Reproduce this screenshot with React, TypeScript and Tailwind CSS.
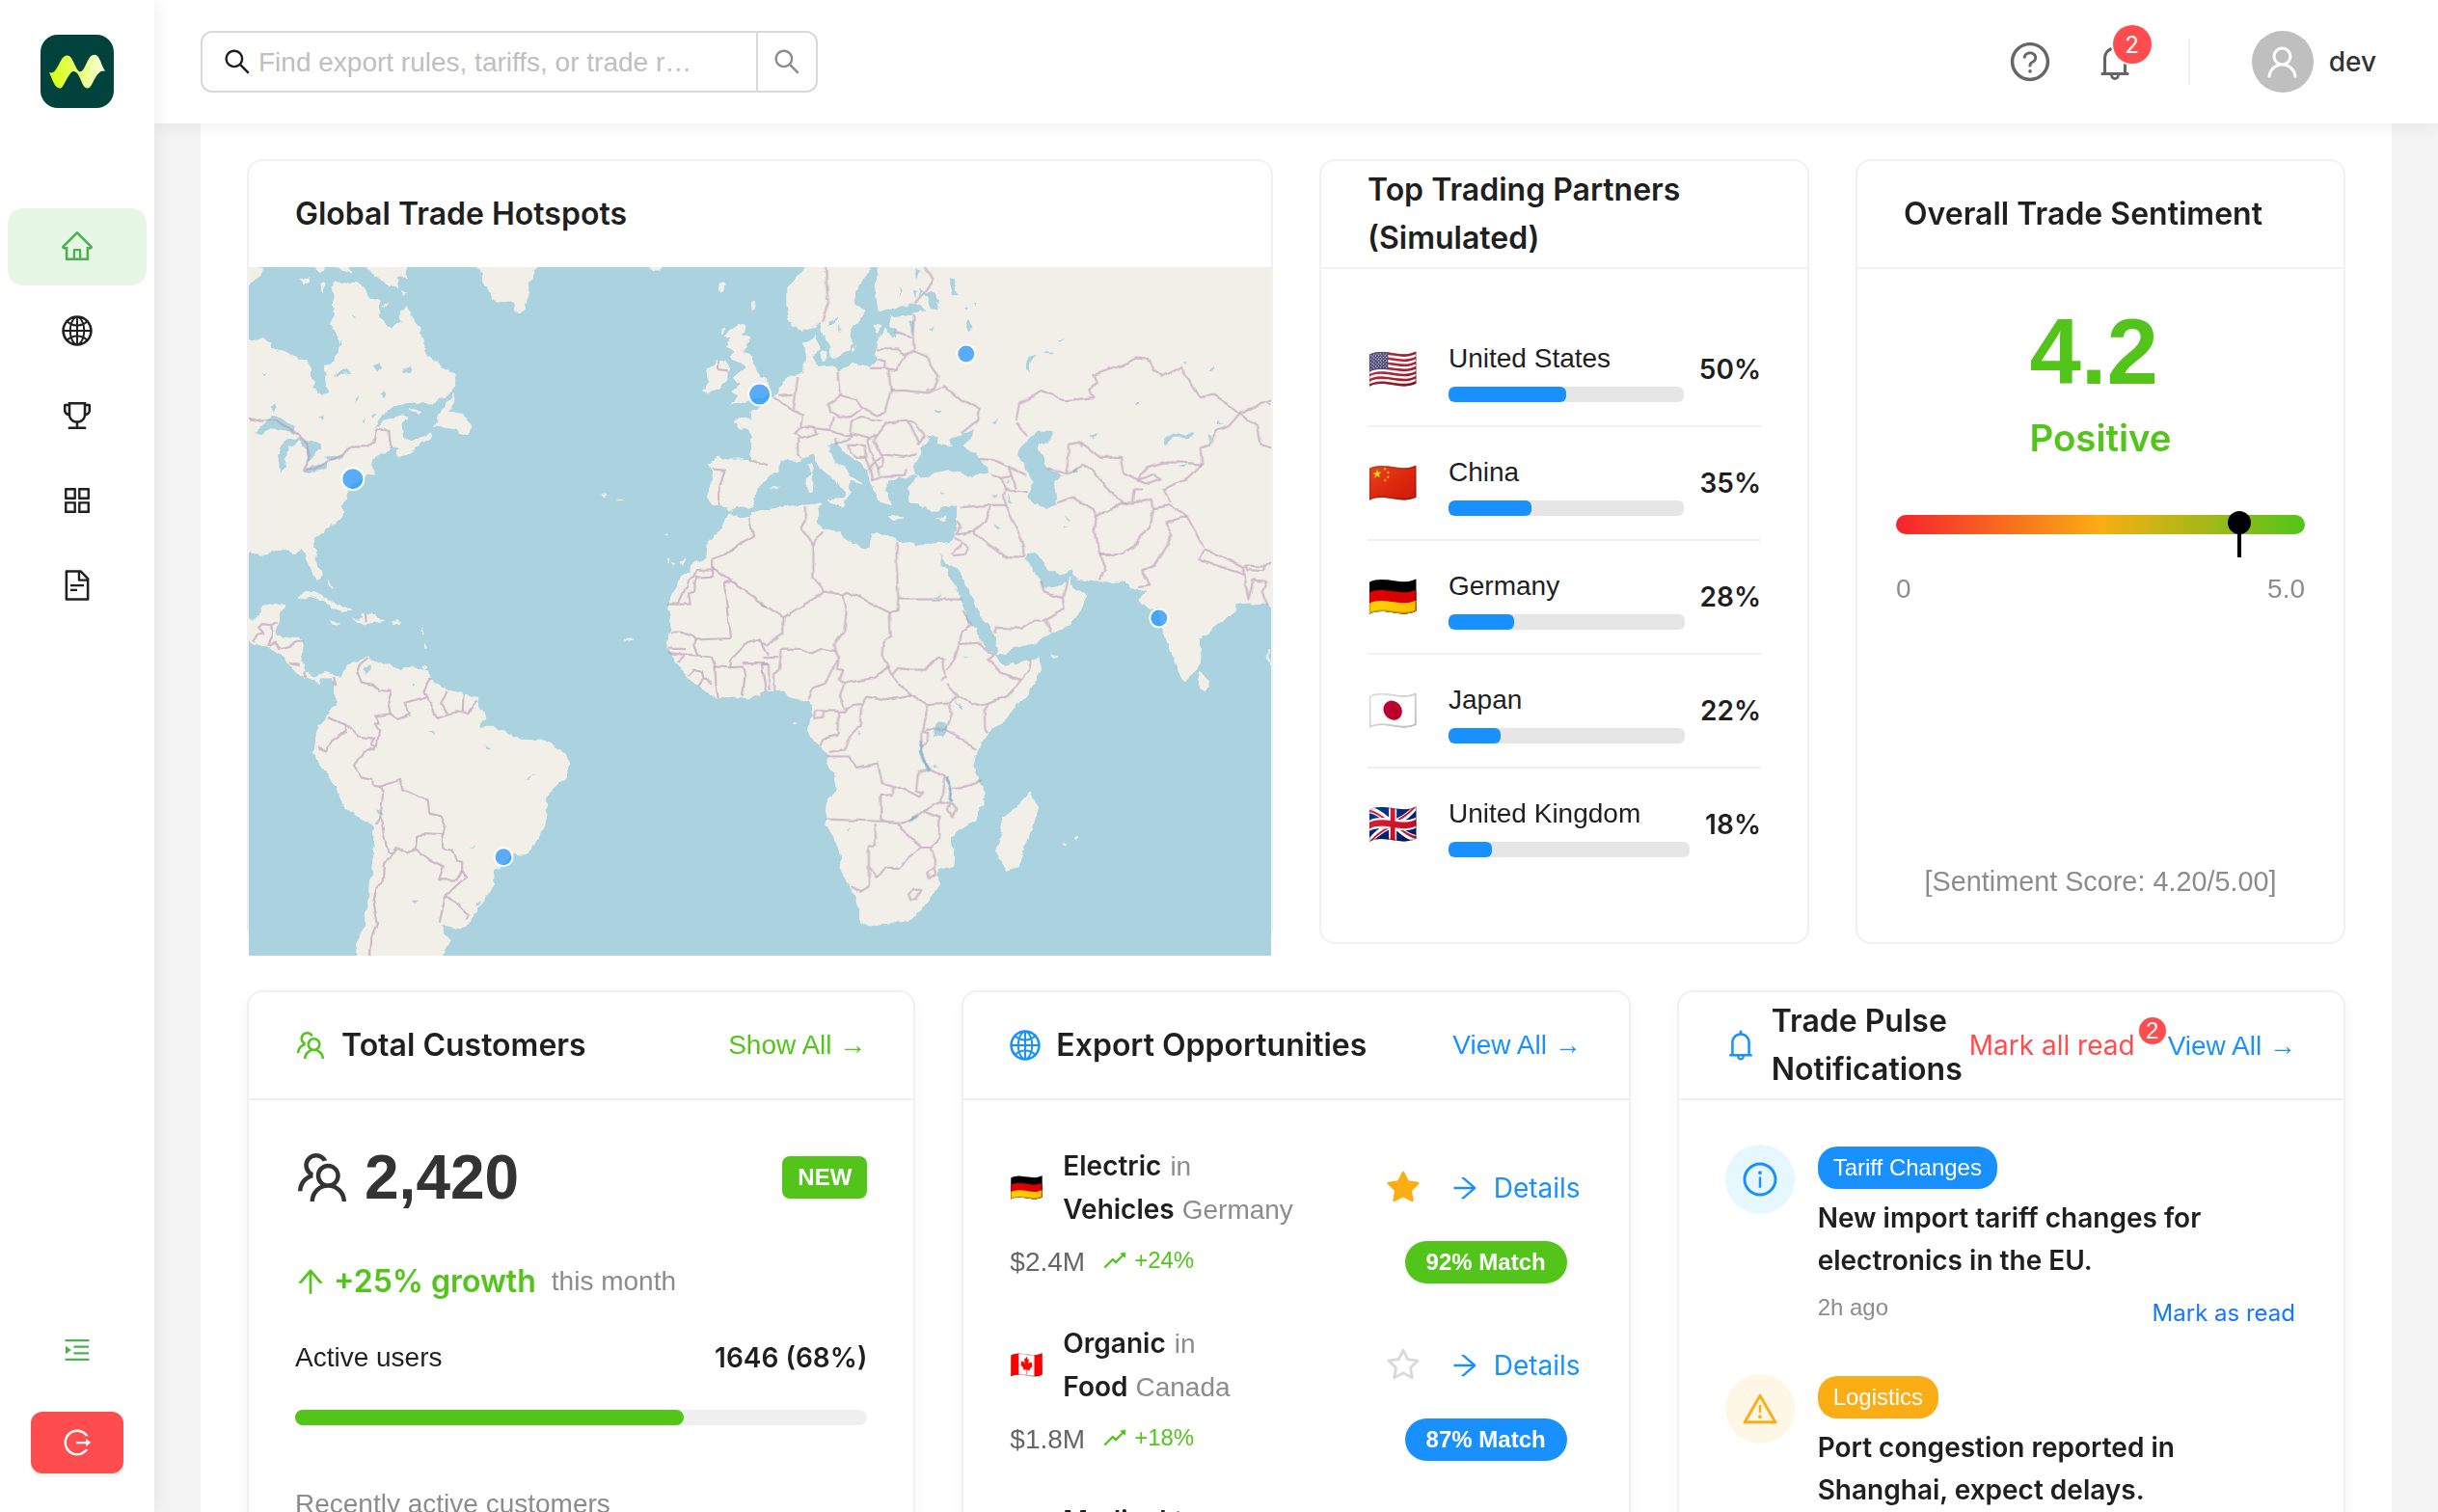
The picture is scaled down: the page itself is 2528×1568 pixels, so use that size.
import React from "react";
import {
  AiOutlineHome,
  AiOutlineGlobal,
  AiOutlineTrophy,
  AiOutlineAppstore,
  AiOutlineFileText,
  AiOutlineMenuUnfold,
  AiOutlineLogout,
  AiOutlineSearch,
  AiOutlineQuestionCircle,
  AiOutlineBell,
  AiOutlineUser,
  AiOutlineTeam,
  AiOutlineArrowUp,
  AiOutlineArrowRight,
  AiFillStar,
  AiOutlineStar,
  AiOutlineRise,
  AiOutlineInfoCircle,
  AiOutlineWarning,
} from "react-icons/ai";

function Logo() {
  return (
    <svg viewBox="0 0 76 76" className="size-[76px]">
      <defs>
        <linearGradient id="wave" x1="0" x2="1" y1="0" y2="0">
          <stop offset="0.1" stopColor="#d9ff1a" />
          <stop offset="0.55" stopColor="#e9ff7a" />
          <stop offset="1" stopColor="#fbffe6" />
        </linearGradient>
      </defs>
      <rect width="76" height="76" rx="18" fill="#02423c" />
      <path
        fill="url(#wave)"
        d="M9 39C14 41 16 36 19 31C22 25 24 21.500 27.400 21.500C32 21.500 34 28 36 32C38 36.500 39.500 38.300 41.200 38.300C44 38.300 46 33 49 27C51 23 53 20.800 56 20.800C60 20.800 62 27 64 32C65.500 35.500 66.500 37 67.600 37.600C65 37.300 64 37.500 62.700 38C59 40 56 46 54 50C52 54 50.500 55.500 48.500 55.500C45 55.500 43 50 41 45C39 40.500 37 38 34 38C31 38 28 45 25 50C23 54 22 55.500 19.800 55.500C15 55.500 12.500 47 9 39Z"
      />
    </svg>
  );
}

const menu = [AiOutlineHome, AiOutlineGlobal, AiOutlineTrophy, AiOutlineAppstore, AiOutlineFileText];

function Sidebar() {
  return (
    <aside className="relative z-20 flex h-full w-[160px] shrink-0 flex-col items-center bg-white shadow-[4px_0_16px_rgba(0,0,0,0.06)]">
      <div className="mt-9">
        <Logo />
      </div>
      <nav className="mt-[104px] flex flex-col gap-2">
        {menu.map((Icon, i) => (
          <div
            key={i}
            className={
              i === 0
                ? "flex h-20 w-[144px] items-center justify-center rounded-2xl bg-[#e6f7e6] pb-[3px] text-[#4caf50]"
                : "flex h-20 w-[144px] items-center justify-center rounded-2xl pb-[3px] text-[#1f1f1f]"
            }
          >
            <Icon size={36} />
          </div>
        ))}
      </nav>
      <div className="mt-auto text-[#4caf50]">
        <AiOutlineMenuUnfold size={32} />
      </div>
      <button className="mt-12 mb-10 flex h-16 w-24 items-center justify-center rounded-xl bg-[#ff4d4f] text-white shadow-[0_4px_0_rgba(255,38,5,0.06)]">
        <AiOutlineLogout size={32} />
      </button>
    </aside>
  );
}

function Header() {
  return (
    <header className="relative z-10 flex h-32 shrink-0 items-center justify-between bg-white pr-16 pl-12 shadow-[0_4px_16px_rgba(0,0,0,0.06)]">
      <div className="flex h-16 w-[640px] overflow-hidden rounded-xl border-2 border-[#d9d9d9] bg-white">
        <div className="flex flex-1 items-center gap-1.5 pl-5">
          <AiOutlineSearch size={32} className="text-[#1f1f1f]" />
          <span className="pt-0.5 text-[28px] text-[#bfbfbf]">Find export rules, tariffs, or trade r…</span>
        </div>
        <div className="flex w-[62px] items-center justify-center border-l-2 border-[#d9d9d9] text-[#8c8c8c]">
          <AiOutlineSearch size={32} />
        </div>
      </div>
      <div className="flex items-center">
        <AiOutlineQuestionCircle size={46} className="text-[#666]" />
        <div className="relative ml-[43px]">
          <AiOutlineBell size={44} className="text-[#666]" />
          <span className="absolute -top-4 left-5 flex size-10 items-center justify-center rounded-full bg-[#ff4d4f] pt-0.5 font-[Inter] text-2xl text-white ring-2 ring-white">
            2
          </span>
        </div>
        <div className="ml-[54px] h-12 w-0.5 bg-[#f0f0f0]" />
        <div className="ml-16 flex size-16 items-center justify-center rounded-full bg-[#bfbfbf] text-white">
          <AiOutlineUser size={41} />
        </div>
        <span className="ml-4 font-[Inter] text-[28px] font-medium text-[#333]">dev</span>
      </div>
    </header>
  );
}

const landWest = [
  "M-5,175L20,180L40,176L75,185L100,200L130,212L160,218L185,222L188,262L205,270L200,280L225,300L245,295L240,260L232,235L255,225L278,210L282,190L275,165L247,142L265,120L262,85L255,60L265,48L300,52L330,48L355,62L362,80L395,88L398,128L432,152L465,135L470,110L477,98L495,125L520,155L530,185L545,212L590,238L620,250L625,275L615,292L580,310L555,320L500,318L445,322L415,340L380,378L420,358L465,345L485,350L470,365L475,395L495,405L550,385L555,398L520,412L490,425L460,440L452,425L465,415L435,418L410,430L378,445L375,465L385,472L360,478L330,490L305,515L300,530L285,545L292,560L280,575L250,595L210,615L198,640L205,660L220,690L222,710L210,714L190,690L178,655L160,645L135,652L115,642L80,645L60,658L30,655L-5,650Z",
  "M565,368L590,330L625,298L622,318L605,335L650,340L655,355L672,370L665,388L640,380L615,375L590,368Z",
  "M485,328L525,335L515,342Z",
  "M-5,5L45,20L40,35L20,42L-5,65Z",
  "M160,45L185,38L190,45L170,55Z",
  "M220,55L232,50L228,70Z",
  "M190,5L240,5L238,18L215,25Z",
  "M255,5L300,5L320,28L290,22Z",
  "M350,5L485,5L480,38L450,35L455,62L420,50L390,35L362,20Z",
  "M410,102L425,98L420,104Z",
  "M465,66L478,70L472,76Z",
  "M693,5L883,5L850,45L845,80L830,115L805,108L790,92L755,95L735,75L715,50Z",
  "M1200,5L1262,5L1240,22L1225,20Z",
  "M150,755L175,742L215,742L250,758L280,768L320,782L300,784L265,776L240,764L215,754L190,748Z",
  "M318,802L350,800L342,788L375,788L412,802L385,806L360,810L345,806Z",
  "M253,804L282,808L265,811Z",
  "M437,803L460,803L458,808L440,809Z",
  "M250,715L260,728L256,732Z",
  "M525,820L532,835L528,835Z M533,850L538,862L534,862Z M527,902L540,904L532,910Z",
  "M-5,800L25,802L50,770L85,764L110,768L95,800L85,830L90,842L120,838L155,838L170,850L165,890L175,920L205,930L235,918L262,925L280,930L300,903L330,895L365,885L370,895L410,895L450,908L475,905L520,908L545,915L550,930L590,955L650,962L690,975L720,1018L700,1040L745,1040L800,1055L820,1068L890,1070L925,1085L960,1098L970,1125L955,1150L925,1175L903,1195L900,1240L885,1280L850,1320L808,1322L770,1345L745,1355L742,1390L700,1440L665,1478L640,1488L585,1478L610,1515L590,1545L570,1560L330,1560L330,1525L350,1490L365,1440L375,1370L385,1290L385,1260L350,1245L290,1212L255,1160L205,1100L205,1085L212,1040L245,1010L268,990L265,945L250,930L225,930L222,942L170,930L130,905L100,875L60,860L20,852L-5,840Z",
  "M1375,290L1390,270L1380,245L1400,238L1420,222L1448,228L1445,270L1420,285L1390,297Z",
  "M1455,155L1480,145L1495,150L1490,165L1515,168L1508,190L1490,205L1515,210L1530,235L1545,260L1567,265L1575,290L1560,305L1510,310L1455,322L1480,305L1460,290L1485,275L1470,265L1495,240L1490,228L1462,220L1465,200L1445,190L1455,175L1440,168Z",
  "M1432,152L1440,150L1430,165Z M1422,55L1438,53L1428,72Z M1520,95L1530,92L1522,112Z",
  "M1600,315L1560,325L1540,348L1515,340L1520,352L1467,355L1485,372L1510,380L1528,405L1520,443L1470,445L1415,438L1395,450L1400,480L1390,520L1400,545L1430,545L1452,560L1475,548L1520,548L1540,515L1560,490L1600,470Z",
  "M1452,565L1480,575L1520,572L1568,552L1568,960L1510,975L1470,970L1420,978L1385,960L1330,930L1290,895L1262,855L1280,825L1268,775L1300,715L1340,680L1385,655L1390,625L1435,595Z",
  "M1068,520L1082,520L1075,524Z M1117,531L1130,533L1120,535Z M1258,609L1270,611L1262,612Z M1268,672L1276,670L1272,677Z M1282,676L1292,676L1286,680Z M1310,670L1322,662L1314,676Z M1138,848L1165,846L1150,850Z",
];

const landEast = [
  "M-30,335L0,325L35,305L70,270L85,258L130,252L132,205L130,185L165,168L168,200L155,215L165,240L210,236L232,250L280,230L325,238L345,225L350,180L372,150L385,175L400,175L402,155L385,140L390,128L460,120L500,110L460,98L400,105L352,115L345,75L350,5L1545,5L1545,785L1515,760L1430,765L1425,780L1360,820L1320,840L1318,890L1310,910L1275,935L1255,920L1230,865L1205,825L1195,770L1165,775L1135,755L1160,738L1120,730L1090,712L1040,715L1000,715L950,708L930,690L900,700L870,692L845,670L825,648L795,650L790,660L815,690L840,720L850,728L875,728L900,720L925,705L935,730L980,750L950,790L900,820L850,840L780,860L712,878L700,840L660,790L632,745L600,700L570,672L565,650L575,625L588,600L588,550L545,550L510,560L480,545L445,540L440,505L460,490L480,485L455,480L430,485L380,490L370,510L390,545L345,535L330,505L318,470L280,440L245,425L230,405L200,408L200,430L240,460L300,498L272,492L260,500L270,520L245,535L255,515L210,480L175,460L150,430L110,445L50,445L40,470L0,495L-30,500Z",
  "M140,5L110,35L75,60L75,100L85,135L115,158L150,150L175,135L185,165L205,190L210,215L230,215L265,195L270,150L300,130L310,110L280,95L285,65L325,15L328,5Z",
  "M-30,560L0,555L90,545L130,548L175,545L165,590L195,600L235,608L250,625L310,642L325,640L330,612L375,610L405,625L480,635L530,628L560,632L577,625L570,678L560,675L530,650L545,680L580,725L605,770L615,800L645,825L670,860L705,880L725,903L790,895L838,885L835,915L800,970L730,1020L680,1055L645,1095L638,1120L650,1160L665,1170L665,1215L640,1245L600,1265L570,1285L580,1320L578,1345L530,1360L530,1395L495,1435L440,1470L380,1478L320,1487L295,1470L295,1445L265,1400L240,1350L232,1310L190,1250L195,1210L222,1180L210,1130L185,1090L140,1050L155,995L140,978L95,980L70,958L0,960L-30,965Z",
  "M808,1183L828,1222L800,1290L775,1350L740,1357L715,1335L710,1305L728,1275L722,1240L760,1225L785,1205Z",
  "M1320,915L1345,945L1330,960L1312,952Z",
  "M198,532L245,530L240,548Z M134,482L155,478L152,515L135,510Z M138,458L150,452L148,475Z M383,570L430,573L400,577Z M528,576L558,569L545,580Z M173,205L195,203L190,225Z M30,505L50,503L42,509Z",
  "M875,878L892,880L880,884Z M905,1296L918,1298L910,1302Z M942,1285L952,1286L945,1290Z M1522,880L1528,870L1526,900Z M97,1030L108,1032L102,1033Z M270,195L280,185L275,200Z M345,142L360,145L350,160Z",
];

const lakesWest = [
  "M22,385L50,365L75,348L110,355L120,365L148,368L140,385L105,380L80,375L50,385Z",
  "M100,415L120,400L165,398L150,410L125,415L118,440L122,462L108,474L95,460L92,440Z",
  "M150,398L185,400L215,405L225,420L200,425L195,440L185,450L178,425L165,405Z",
  "M172,472L200,460L240,450L235,462L190,474Z",
  "M235,440L285,432L280,442L240,446Z",
  "M355,908L370,905L372,918L358,922Z",
  "M462,245L490,235L495,248L475,250Z",
  "M382,235L400,228L410,240L392,248Z",
  "M74,325L88,320L92,330L80,337Z",
  "M260,255L285,246L318,250L280,254Z",
  "M400,295L412,290L416,302L405,305Z M320,318L340,302L332,314Z M220,348L232,347L230,354Z M310,124L330,126L318,130Z M345,352L360,350L352,358Z M220,200L245,192L235,205Z M270,195L290,178L282,192Z M50,248L64,250L58,255Z M375,345L390,342L380,352Z",
  "M388,1222L400,1226L408,1238L396,1235Z",
  "M498,1424L520,1422L512,1432Z M500,942L512,940L506,950Z M840,1156L872,1146L850,1157Z M668,1314L688,1302L676,1314Z M718,1080L732,1088L722,1090Z M548,1050L564,1054L556,1058Z M690,1440L706,1425L700,1438Z",
];

const lakesEast = [
  "M455,460L480,420L505,390L530,396L528,408L550,415L575,412L565,400L600,388L645,378L625,400L600,412L655,440L680,460L682,476L620,482L570,468L520,475L490,486L462,480Z",
  "M770,425L800,400L825,382L870,382L870,405L830,410L825,425L850,440L865,465L900,480L880,495L888,545L855,550L825,545L800,530L815,495L800,470L780,450Z",
  "M1208,412L1212,398L1235,388L1305,385L1300,392L1235,395L1218,414Z",
  "M518,1045L530,1030L560,1030L555,1050L545,1064L520,1062Z",
  "M492,70L515,72L538,92L530,110L508,108L500,92Z",
  "M562,40L585,42L580,60L597,80L575,75Z",
  "M615,140L625,132L638,150L620,155Z",
  "M200,138L228,124L222,140L205,148Z M228,160L242,142L236,156Z",
  "M445,135L456,135L456,158L446,160Z M505,150L520,152L512,156Z",
  "M935,468L950,460L948,472L938,475Z M985,390L1010,388L1000,396Z M955,420L966,404L962,418Z",
  "M1256,456L1284,458L1270,464Z M1340,385L1352,395L1345,404Z M1368,350L1392,366L1370,360Z M1520,316L1535,320L1528,326Z M1126,316L1142,316L1134,322Z",
  "M790,240L800,215L830,210L805,230L810,250L795,245Z M852,206L880,205L870,210Z M888,185L912,170L900,182Z M1340,245L1366,230L1350,245Z M1270,225L1282,224L1276,234Z",
  "M608,105L622,104L616,110Z M634,94L644,96L642,104Z M520,335L542,338L534,343Z M690,368L712,352L706,366Z",
  "M740,520L750,540L744,542Z M738,488L748,492L744,498Z M693,518L710,520L702,526Z M910,572L930,574L920,578Z M908,590L918,588L914,594Z M704,588L718,592L710,596Z M538,518L552,518L545,524Z",
  "M462,22L476,28L468,45Z M470,62L488,66L478,75Z M452,70L462,68L460,80Z M414,60L420,62L416,84Z",
  "M586,978L598,992L604,1002L592,994Z M604,884L618,886L610,890Z M256,1266L274,1264L264,1270Z M290,1050L302,1056L294,1060Z M512,1125L538,1134L520,1132Z M512,755L540,738L530,750Z",
  "M370,500L410,486L440,490L438,520L425,520L440,545L400,540L388,520Z",
];

const deepLakes =
  "M480,1070L478,1095L488,1115L508,1138 M556,1150L568,1170L564,1195L572,1206 M446,1250L470,1238";

const bordersWest = [
  "M-5,350L40,358L85,356L120,370L150,388L182,410L190,445L172,468L205,462L240,448L285,435L305,416L365,415L385,402L392,378L405,374L425,380L428,402L437,418",
  "M20,852L35,835L50,832L35,820L45,810L74,812L75,835L62,855 M74,812L92,805 M60,858L85,850L110,866L135,860L145,850L170,850 M85,848L100,868 M128,898L162,902 M175,915L178,930 M262,925L268,945",
  "M365,885L340,900L332,915L345,940L380,945L400,958L435,960L425,985L432,1010L390,1015L400,1030L385,1030L398,1045L392,1082L375,1080L385,1065L335,1060L300,1035L265,1025L242,1018",
  "M300,1035L298,1050L252,1075L238,1092L215,1085",
  "M390,1085L350,1095L322,1125L345,1150L378,1155L380,1168L400,1170L465,1155L468,1180L545,1202L550,1232L585,1238L597,1258L590,1282",
  "M400,1170L410,1185L402,1240L388,1258 M402,1240L415,1290L425,1318L437,1320",
  "M437,1320L450,1308L480,1318L510,1310L515,1285L530,1276L588,1278L590,1308L620,1312L632,1335L648,1338L648,1358L632,1380L578,1380L592,1350L550,1335L510,1310",
  "M437,1320L415,1345L412,1382L390,1400L380,1435L392,1475L375,1510L370,1560",
  "M648,1358L662,1372L620,1400L597,1418L580,1475 M597,1418L640,1435L668,1460L660,1470",
  "M432,1010L455,1022L490,1012L475,985L545,972L532,960L548,935L555,932 M545,972L558,985L560,1008L575,1018L605,1010L585,985L603,962 M605,1010L650,1003L665,1008L692,982 M650,1003L652,965",
  "M360,788L362,806",
  "M1420,222L1420,245L1448,248 M1402,465L1438,468L1425,500L1422,545 M1512,443L1568,458",
  "M1512,575L1525,615L1485,630L1440,655L1403,665L1403,704L1350,706L1348,738L1330,742L1335,766L1265,766 M1300,764L1330,715L1355,692L1403,690",
  "M1403,685L1460,715L1568,772 M1460,715L1437,718L1455,842L1350,845L1335,835L1305,828L1275,828",
  "M1350,845L1345,855L1358,880L1268,875 M1268,865L1318,866 M1358,880L1400,885L1410,905L1455,907L1460,885L1500,855L1545,845L1568,880 M1300,895L1320,880",
  "M1410,905L1412,945L1420,978 M1455,907L1492,905L1500,925L1492,970 M1492,898L1568,898 M1550,898L1562,960 M1328,925L1345,910L1370,915L1375,930L1358,948 M1375,930L1402,945",
];

const bordersEast = [
  "M192,5L195,55L200,95L180,135 M490,15L515,40L490,70L460,95 M458,120L455,165L458,198 M398,160L420,165L450,172 M345,198L410,198L432,212L458,200L500,212L508,235L530,258L515,285L495,290",
  "M325,240L370,240L370,225L348,220 M370,240L405,245L435,212 M370,240L382,245L388,290L370,340",
  "M388,290L430,290L500,295L550,280L585,305L655,330L652,355L600,385",
  "M228,250L235,300L285,310L300,325L345,345L368,340 M235,300L198,322L205,340L235,350L275,345L300,330",
  "M108,260L95,335L125,345L120,370 M35,305L95,335 M50,300L95,298 M120,370L100,385L120,395L165,385L155,372Z M120,370L205,378L215,350 M205,378L245,390L265,388L270,358L300,350L362,358 M108,395L108,430L120,440",
  "M270,385L325,395L350,388L375,362L440,358L475,410L490,390L460,360L440,358 M350,388L338,400L360,432L430,438L470,432 M325,395L318,400L325,425L340,450L365,435 M220,395L225,408L255,400L270,388 M255,412L310,412L312,440L285,440Z M312,440L325,465L340,450L350,465L365,460L365,435",
  "M325,465L332,490L370,480L430,478L435,465 M350,465L352,480",
  "M655,442L700,445L745,460L795,478 M690,478L720,485L755,480L745,460 M720,485L735,508L765,515L800,518 M755,480L765,510 M735,508L725,520L735,545L690,545L595,550",
  "M765,360L800,390 M765,355L775,320L840,290L915,312L1000,305L985,288L1010,270L1000,255L1080,235L1130,218L1160,220L1175,240L1205,258L1260,238L1318,305L1360,300L1440,340L1535,310 M1440,340L1490,370L1500,410L1535,418",
  "M1440,340L1405,370L1370,380L1350,412L1320,418L1325,455L1270,450L1210,450L1160,460L1130,490",
  "M920,475L920,410L960,405L1020,440L1080,440L1090,475L1130,490L1180,478L1200,488L1165,498L1130,490 M860,465L920,475L965,455L1000,470L1050,520L1100,542 M1325,455L1280,485L1210,510L1230,540",
  "M888,540L935,528L1005,560L1000,600L1015,650L1035,690L1015,712 M1005,570L1060,550L1075,540L1115,540L1120,510L1145,510 M1115,540L1175,530L1180,552L1230,545L1280,570L1305,605L1330,640",
  "M1015,655L1085,655L1130,630L1170,590L1180,552 M1280,570L1215,585L1235,615L1180,680L1145,690L1168,725L1130,728",
  "M1330,645L1370,655L1450,685L1448,698L1370,680L1320,665Z M1455,680L1515,682L1510,692L1462,690Z M1450,690L1465,755L1480,712L1520,715L1505,740L1525,770 M1515,682L1535,672",
  "M735,545L765,595L790,640L790,660L730,660L635,605 M690,545L675,580L635,605L580,612 M580,620L605,630L570,655 M605,630L620,640L610,655L575,658 M588,580L600,590L590,610",
  "M840,715L850,740L905,752L910,775L850,800L820,800L780,820L705,818L700,830 M905,752L918,715 M855,800L870,828",
  "M130,548L130,580L118,595L155,635L155,705L190,738 M155,635L165,615L182,605 M190,738L245,745L258,738L385,785L408,780L410,755L605,755 M408,628L405,650L410,755",
  "M190,738L65,795L0,765 M65,795L65,830L15,855L0,850 M245,745L255,780L248,825L220,855L222,870L180,865L150,875L115,865L60,865L52,910L38,925L38,958",
  "M385,785L388,838L365,850L362,880L380,905 M0,900L20,900L22,958 M0,885L50,885 M222,870L235,885L215,905L190,945L150,955L138,975 M235,880L225,912L245,915L235,935L248,942L235,970L250,1000",
  "M380,905L340,930L300,935L248,942 M380,905L390,925L450,970L500,988 M390,925L410,908L450,912L490,912L530,885L545,885L545,905L555,930L540,935",
  "M605,780L630,812L602,825L595,855L580,890L555,912 M595,855L650,852L700,880 M700,880L680,890L700,900L720,918L780,935L740,970L680,985L650,990L590,972L555,945 M805,890L805,912L780,935 M680,985L670,1000L672,1045L682,1055",
  "M160,1003L250,1005L258,998 M160,1005L158,1020L185,1018L185,1005 M230,1005L228,1058L185,1065L178,1080 M258,998L275,990L300,988L295,1035L265,1060L248,1090L200,1095 M300,988L315,972L370,980L450,970",
  "M500,988L498,1010L480,1050L480,1070 M500,988L560,985L572,1010L555,1045L490,1045 M560,985L585,972 M555,1045L600,1065L645,1090 M480,1050L500,1052L498,1075L480,1085",
  "M195,1105L262,1105L285,1130L350,1120L362,1165L395,1170L395,1190L358,1192L358,1245L375,1250L190,1245 M395,1170L440,1182L475,1195L485,1185L465,1180L470,1140L510,1135L550,1150L540,1205L490,1225",
  "M375,1250L410,1252L445,1248L490,1225L535,1240L535,1285L510,1308L480,1308L445,1285L410,1252 M342,1255L342,1305L322,1305L322,1395L300,1405L268,1395 M325,1350L345,1372L375,1355L415,1355L440,1330L480,1308 M510,1308L522,1335L522,1368L505,1375L500,1362L520,1352",
  "M442,1412L460,1400L480,1405L465,1425L448,1425Z M575,1175L615,1172L662,1160 M540,1205L575,1210L585,1225L572,1240L560,1225L568,1208",
];

const hotspots = [
  { x: 107.8, y: 219.7, r: 11.5 },
  { x: 529.6, y: 132, r: 11.5 },
  { x: 743.8, y: 90, r: 9.5 },
  { x: 943.8, y: 364, r: 9.5 },
  { x: 264, y: 611.7, r: 9.5 },
];

const Paths = ({ list }: { list: string[] }) => (
  <>
    {list.map((d, i) => (
      <path key={i} d={d} vectorEffect="non-scaling-stroke" />
    ))}
  </>
);

const MAP_SCALE = "translate(-2 -7) scale(0.34439 0.46556)";

function WorldMap() {
  return (
    <svg viewBox="0 0 1060 714" className="h-[714px] w-[1060px] bg-[#aad3df]">
      <defs>
        <filter id="coast" x="-20" y="-20" width="1100" height="754" filterUnits="userSpaceOnUse" colorInterpolationFilters="sRGB">
          <feTurbulence type="fractalNoise" baseFrequency="0.09" numOctaves="2" seed="4" />
          <feDisplacementMap in="SourceGraphic" scale="8" xChannelSelector="R" yChannelSelector="G" />
          <feGaussianBlur stdDeviation="0.6" />
        </filter>
        <filter id="border" x="-20" y="-20" width="1100" height="754" filterUnits="userSpaceOnUse" colorInterpolationFilters="sRGB">
          <feTurbulence type="fractalNoise" baseFrequency="0.07" numOctaves="2" seed="9" />
          <feDisplacementMap in="SourceGraphic" scale="5" xChannelSelector="R" yChannelSelector="G" />
          <feGaussianBlur stdDeviation="0.5" />
        </filter>
      </defs>
      <g filter="url(#coast)">
        <g transform={MAP_SCALE}>
          <g fill="#f2efe9" stroke="#f2efe9" strokeWidth="1" strokeLinejoin="round">
            <Paths list={landWest} />
            <g transform="translate(1550.600 0)">
              <Paths list={landEast} />
            </g>
          </g>
          <g fill="#aad3df">
            <Paths list={lakesWest} />
            <g transform="translate(1550.600 0)">
              <Paths list={lakesEast} />
            </g>
          </g>
        </g>
      </g>
      <g filter="url(#border)">
        <g transform={MAP_SCALE}>
          <g fill="none" stroke="#b897b0" strokeOpacity="0.6" strokeWidth="2.2" strokeLinejoin="round">
            <Paths list={bordersWest} />
            <g transform="translate(1550.600 0)">
              <Paths list={bordersEast} />
              <path d={deepLakes} stroke="#8fb4cf" strokeOpacity="1" strokeWidth="3" vectorEffect="non-scaling-stroke" />
            </g>
          </g>
        </g>
      </g>
      {hotspots.map((h, i) => (
        <g key={i}>
          <circle cx={h.x} cy={h.y} r={h.r} fill="#1890ff" fillOpacity="0.7" />
          <circle cx={h.x} cy={h.y} r={h.r} fill="none" stroke="#fff" strokeWidth="2" />
        </g>
      ))}
    </svg>
  );
}

const Title = ({ children }: { children: React.ReactNode }) => (
  <h3 className="font-[Inter] text-[32px] leading-[50px] font-semibold text-[#1f1f1f]">{children}</h3>
);

function MapCard() {
  return (
    <section className="h-[814px] w-[1064px] rounded-2xl border-2 border-[#f0f0f0] bg-white">
      <div className="flex h-[110px] items-center px-12">
        <Title>Global Trade Hotspots</Title>
      </div>
      <WorldMap />
    </section>
  );
}

const partners = [
  { flag: "🇺🇸", name: "United States", pct: 50 },
  { flag: "🇨🇳", name: "China", pct: 35 },
  { flag: "🇩🇪", name: "Germany", pct: 28 },
  { flag: "🇯🇵", name: "Japan", pct: 22 },
  { flag: "🇬🇧", name: "United Kingdom", pct: 18 },
];

function PartnersCard() {
  return (
    <section className="h-[814px] w-[508px] rounded-2xl border-2 border-[#f0f0f0] bg-white">
      <div className="flex h-[112px] items-center border-b-2 border-[#f0f0f0] px-12">
        <Title>
          Top Trading Partners
          <br />
          (Simulated)
        </Title>
      </div>
      <ul className="mx-12 mt-[46px]">
        {partners.map((p) => (
          <li key={p.name} className="flex h-[118px] items-center border-b-2 border-[#f0f0f0] last:border-transparent">
            <span className="w-[84px] text-[42px] leading-none">{p.flag}</span>
            <div className="flex-1">
              <div className="pt-px text-[28px] leading-[44px]">{p.name}</div>
              <div className="mt-[7px] h-4 overflow-hidden rounded-md bg-[#e6e6e6]">
                <div className="h-full rounded-md bg-[#1890ff]" style={{ width: `${p.pct}%` }} />
              </div>
            </div>
            <span className="ml-4 font-[Inter] text-[28px] font-semibold">{p.pct}%</span>
          </li>
        ))}
      </ul>
    </section>
  );
}

function SentimentCard() {
  return (
    <section className="flex h-[814px] w-[508px] flex-col rounded-2xl border-2 border-[#f0f0f0] bg-white">
      <div className="flex h-[112px] shrink-0 items-center border-b-2 border-[#f0f0f0] px-12">
        <Title>Overall Trade Sentiment</Title>
      </div>
      <div className="flex flex-1 flex-col items-center px-10 pb-[41px]">
        <div className="mt-[38px] text-[#52c41a]">
          <div className="text-[96px] leading-[96px] font-bold">4.2</div>
          <div className="mt-[10px] font-[Inter] text-[38.4px] leading-[62px] font-semibold">Positive</div>
        </div>
        <div className="relative mt-[49px] h-5 w-[424px] rounded-full bg-[linear-gradient(to_right,#f5222d,#faad14_50%,#52c41a)]">
          <div className="absolute -top-1 left-[344px] size-6 rounded-full bg-black" />
          <div className="absolute top-2 left-[354px] h-9 w-1 bg-black" />
        </div>
        <div className="mt-[35px] flex w-[424px] justify-between text-[28px] leading-[44px] text-[#8c8c8c]">
          <span>0</span>
          <span>5.0</span>
        </div>
        <div className="mt-auto text-[28.8px] leading-[44px] text-[#8c8c8c]">[Sentiment Score: 4.20/5.00]</div>
      </div>
    </section>
  );
}

const cardClass =
  "h-[700px] min-w-0 flex-1 rounded-2xl border-2 border-[#f0f0f0] bg-white shadow-[0_4px_16px_rgba(0,0,0,0.04)]";

function CustomersCard() {
  return (
    <section className={cardClass}>
      <div className="flex h-[112px] items-center border-b-2 border-[#f0f0f0] px-12">
        <AiOutlineTeam size={36} className="-ml-0.5 mr-3.5 text-[#52c41a]" />
        <Title>Total Customers</Title>
        <span className="mr-px ml-auto text-[28px] text-[#52c41a]">Show All →</span>
      </div>
      <div className="px-12 pt-10">
        <div className="flex h-20 items-center">
          <AiOutlineTeam size={64} className="-ml-1 text-[#333]" />
          <span className="ml-3 text-[64px] leading-none font-bold text-[#333]">2,420</span>
          <span className="ml-auto flex h-11 items-center rounded-lg bg-[#52c41a] px-4 text-2xl font-bold text-white">NEW</span>
        </div>
        <div className="mt-[43px] flex h-[50px] items-center">
          <AiOutlineArrowUp size={36} className="-ml-0.5 text-[#52c41a]" />
          <span className="ml-1.5 font-[Inter] text-[32px] font-semibold text-[#52c41a]">+25% growth</span>
          <span className="ml-4 text-[28px] text-[#8c8c8c]">this month</span>
        </div>
        <div className="mt-[32px] flex items-center justify-between text-[28px] leading-[44px]">
          <span>Active users</span>
          <span className="font-[Inter] font-semibold">1646 (68%)</span>
        </div>
        <div className="mt-8 h-4 rounded-full bg-[#f0f0f0]">
          <div className="h-full w-[68%] rounded-full bg-[#52c41a]" />
        </div>
        <div className="mt-[60px] text-[28px] leading-[44px] text-[#8c8c8c]">Recently active customers</div>
      </div>
    </section>
  );
}

const exportsList = [
  { flag: "🇩🇪", a: "Electric", b: "Vehicles", c: "Germany", v: "$2.4M", g: "+24%", m: "92% Match", star: true },
  { flag: "🇨🇦", a: "Organic", b: "Food", c: "Canada", v: "$1.8M", g: "+18%", m: "87% Match", star: false },
  { flag: "🇯🇵", a: "Medical", b: "Devices", c: "Japan", v: "$3.1M", g: "+15%", m: "85% Match", star: false },
];

function ExportCard() {
  return (
    <section className={cardClass}>
      <div className="flex h-[112px] items-center border-b-2 border-[#f0f0f0] px-12">
        <AiOutlineGlobal size={36} className="-ml-0.5 mr-3.5 text-[#1890ff]" />
        <Title>Export Opportunities</Title>
        <span className="mr-px ml-auto text-[28px] text-[#1890ff]">View All →</span>
      </div>
      <div className="px-12 pt-[47px]">
        {exportsList.map((e) => (
          <div key={e.a} className="h-[184px]">
            <div className="flex h-[88px] items-center">
              <span className="w-[55px] text-[28px] leading-none">{e.flag}</span>
              <div className="text-[28px] leading-[44px] text-[#8c8c8c]">
                <div>
                  <b className="mr-[9px] font-[Inter] font-semibold text-[#1f1f1f]">{e.a}</b>in
                </div>
                <div>
                  <b className="mr-2 font-[Inter] font-semibold text-[#1f1f1f]">{e.b}</b>
                  {e.c}
                </div>
              </div>
              <div className="mr-0.5 ml-auto flex items-center text-[#1890ff]">
                {e.star ? (
                  <AiFillStar size={40} className="text-[#faad14]" />
                ) : (
                  <AiOutlineStar size={40} className="text-[#d9d9d9]" />
                )}
                <AiOutlineArrowRight size={32} className="ml-7" />
                <span className="ml-3.5 font-[Inter] text-[28px]">Details</span>
              </div>
            </div>
            <div className="mt-[11px] flex h-[44px] items-center">
              <span className="text-[28px] text-[#666]">{e.v}</span>
              <AiOutlineRise size={28} className="mb-1 ml-[17px] text-[#52c41a]" />
              <span className="mb-1 ml-1.5 text-2xl text-[#52c41a]">{e.g}</span>
              <span
                className={
                  e.star
                    ? "mr-4 ml-auto flex h-11 items-center rounded-3xl bg-[#52c41a] px-[22px] text-2xl font-bold text-white"
                    : "mr-4 ml-auto flex h-11 items-center rounded-3xl bg-[#1890ff] px-[22px] text-2xl font-bold text-white"
                }
              >
                {e.m}
              </span>
            </div>
          </div>
        ))}
      </div>
    </section>
  );
}

function Notice({
  icon,
  iconClass,
  tag,
  tagClass,
  lines,
}: {
  icon: React.ReactNode;
  iconClass: string;
  tag: string;
  tagClass: string;
  lines: string[];
}) {
  return (
    <div className="flex h-[238px]">
      <div className={iconClass}>{icon}</div>
      <div className="ml-6 flex-1 pt-0.5">
        <span className={tagClass}>{tag}</span>
        <div className="mt-2 font-[Inter] text-[28px] leading-[44px] font-semibold">
          {lines[0]}
          <br />
          {lines[1]}
        </div>
        <div className="mt-2 mr-0.5 flex justify-between">
          <span className="text-2xl leading-[38px] text-[#8c8c8c]">2h ago</span>
          <span className="pt-1.5 font-[Inter] text-2xl leading-[38px] text-[#1677ff]">Mark as read</span>
        </div>
      </div>
    </div>
  );
}

function NotificationsCard() {
  return (
    <section className={cardClass}>
      <div className="flex h-[112px] items-center border-b-2 border-[#f0f0f0] px-12">
        <AiOutlineBell size={36} className="-ml-0.5 mr-3.5 text-[#1890ff]" />
        <Title>
          Trade Pulse
          <br />
          Notifications
        </Title>
        <div className="mr-px ml-auto flex items-center">
          <div className="relative">
            <span className="font-[Inter] text-[28px] text-[#ff4d4f]">Mark all read</span>
            <span className="absolute -top-2 -right-8 flex size-7 items-center justify-center rounded-full bg-[#ff4d4f] text-2xl text-white">
              2
            </span>
          </div>
          <span className="ml-[34px] pt-0.5 text-[28px] text-[#1890ff]">View All →</span>
        </div>
      </div>
      <div className="px-12 pt-[46px]">
        <Notice
          icon={<AiOutlineInfoCircle size={40} />}
          iconClass="flex size-[72px] items-center justify-center rounded-full bg-[#e6f7ff] text-[#1890ff]"
          tag="Tariff Changes"
          tagClass="flex h-11 w-fit items-center rounded-[20px] bg-[#1890ff] px-4 text-2xl text-white"
          lines={["New import tariff changes for", "electronics in the EU."]}
        />
        <Notice
          icon={<AiOutlineWarning size={40} />}
          iconClass="flex size-[72px] items-center justify-center rounded-full bg-[#fff7e6] text-[#faad14]"
          tag="Logistics"
          tagClass="flex h-11 w-fit items-center rounded-[20px] bg-[#faad14] px-4 text-2xl text-white"
          lines={["Port congestion reported in", "Shanghai, expect delays."]}
        />
      </div>
    </section>
  );
}

export default function App() {
  return (
    <div className="flex h-[1568px] w-[2528px] overflow-hidden bg-[#f4f4f4] font-['Liberation_Sans','Noto_Color_Emoji',sans-serif] text-[#1f1f1f]">
      <Sidebar />
      <div className="flex min-w-0 flex-1 flex-col">
        <Header />
        <main className="mx-12 flex flex-1 flex-col gap-12 bg-white px-12 pt-[37px]">
          <div className="flex gap-12">
            <MapCard />
            <PartnersCard />
            <SentimentCard />
          </div>
          <div className="flex gap-12">
            <CustomersCard />
            <ExportCard />
            <NotificationsCard />
          </div>
        </main>
      </div>
    </div>
  );
}
